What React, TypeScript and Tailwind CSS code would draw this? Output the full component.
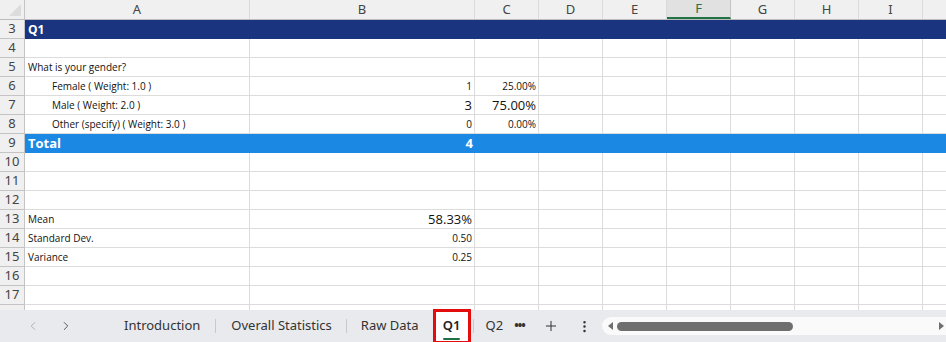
import { ChevronLeft, ChevronRight, Plus, MoreVertical } from "lucide-react";

const COLS = [
  { l: "A", w: 225 },
  { l: "B", w: 225 },
  { l: "C", w: 64 },
  { l: "D", w: 64 },
  { l: "E", w: 64 },
  { l: "F", w: 64 },
  { l: "G", w: 64 },
  { l: "H", w: 64 },
  { l: "I", w: 64 },
  { l: "", w: 64 },
];

type Row = {
  n: number | null;
  kind?: "title" | "total";
  a?: string;
  b?: string;
  c?: string;
  indent?: boolean;
  big?: boolean;
};

const ROWS: Row[] = [
  { n: 3, kind: "title", a: "Q1" },
  { n: 4 },
  { n: 5, a: "What is your gender?" },
  { n: 6, a: "Female ( Weight: 1.0 )", indent: true, b: "1", c: "25.00%" },
  { n: 7, a: "Male ( Weight: 2.0 )", indent: true, b: "3", c: "75.00%", big: true },
  { n: 8, a: "Other (specify) ( Weight: 3.0 )", indent: true, b: "0", c: "0.00%" },
  { n: 9, kind: "total", a: "Total", b: "4" },
  { n: 10 },
  { n: 11 },
  { n: 12 },
  { n: 13, a: "Mean", b: "58.33%", big: true },
  { n: 14, a: "Standard Dev.", b: "0.50" },
  { n: 15, a: "Variance", b: "0.25" },
  { n: 16 },
  { n: 17 },
  { n: null },
];

const cellFont = { fontFamily: '"Open Sans", "Noto Sans", sans-serif' };
const uiFont = { fontFamily: '"Noto Sans", "Open Sans", sans-serif' };

function HeaderRow() {
  return (
    <div className="flex h-[20px] shrink-0 border-b border-[#bdbdbd] bg-[#f0f0f0]" style={uiFont}>
      <div className="relative w-[25px] shrink-0 border-r border-[#c4c4c4]">
        <div className="absolute bottom-[3px] right-[3px] h-0 w-0 border-b-[12px] border-l-[12px] border-b-[#dcdcdc] border-l-transparent" />
      </div>
      {COLS.map((c, i) => (
        <div
          key={i}
          className={
            c.l === "F"
              ? "flex shrink-0 items-center justify-center border-r border-[#c4c4c4] border-b-2 border-b-[#217346] bg-[#e1e1e1] text-[13px] text-[#217346]"
              : "flex shrink-0 items-center justify-center border-r border-[#dadada] text-[13px] text-[#444]"
          }
          style={{ width: c.w }}
        >
          {c.l}
        </div>
      ))}
    </div>
  );
}

function SheetRow({ r }: { r: Row }) {
  const filled = r.kind === "title" || r.kind === "total";
  const bg = r.kind === "title" ? "bg-[#1b3480]" : r.kind === "total" ? "bg-[#1b88e4]" : "bg-white";
  return (
    <div className="flex h-[19px] shrink-0">
      <div
        className="flex w-[25px] shrink-0 items-center justify-center border-r border-b border-[#c4c4c4] bg-[#f0f0f0] text-[13px] text-[#444]"
        style={uiFont}
      >
        {r.n}
      </div>
      <div className={`flex ${bg}`} style={cellFont}>
        {COLS.map((c, i) => {
          let text: string | undefined;
          let align = "justify-end pr-[2px]";
          let size = "text-[10px]";
          if (i === 0) {
            text = r.a;
            align = r.indent ? "justify-start pl-[27px]" : "justify-start pl-[3px]";
          } else if (i === 1) {
            text = r.b;
            if (r.big) size = "text-[13px]";
          } else if (i === 2) {
            text = r.c;
            if (r.big) size = "text-[13px]";
          }
          let color = "text-[#111]";
          if (r.kind === "title") {
            size = "text-[12px] font-bold";
            color = "text-white";
          } else if (r.kind === "total") {
            size = "text-[13px] font-bold";
            color = "text-white";
          }
          const borders = filled ? "" : "border-r border-b border-[#dcdcdc]";
          return (
            <div
              key={i}
              className={`flex shrink-0 items-center ${align} ${borders} ${size} ${color} whitespace-nowrap leading-none`}
              style={{ width: c.w }}
            >
              {text}
            </div>
          );
        })}
      </div>
    </div>
  );
}

function Sep() {
  return <div className="h-[14px] w-px shrink-0 bg-[#c9c9c9]" />;
}

function TabBar() {
  return (
    <div className="flex h-[32px] shrink-0 items-center bg-[#e9eaed] text-[13px] text-[#333]" style={uiFont}>
      <div className="flex w-[111px] shrink-0 items-center pl-[26px]">
        <ChevronLeft size={14} strokeWidth={1.5} className="text-[#a8a8a8]" />
        <ChevronRight size={14} strokeWidth={1.5} className="ml-[19px] text-[#444]" />
      </div>
      <div className="pl-[13px] pr-[15px]">Introduction</div>
      <Sep />
      <div className="pl-[15px] pr-[14px]">Overall Statistics</div>
      <Sep />
      <div className="px-[14px]">Raw Data</div>
      <div className="flex h-[35px] w-[38px] shrink-0 items-center justify-center border-[3px] border-[#e30d0d] bg-white">
        <div className="relative font-semibold text-[#222]">
          Q1
          <div className="absolute -bottom-[4px] left-0 right-0 h-[2px] rounded bg-[#1e7145]" />
        </div>
      </div>
      <div className="ml-[2px]"><Sep /></div>
      <div className="pl-[12px] pr-[11px]">Q2</div>
      <div className="text-[12px] font-bold tracking-[-1px] text-[#333]">•••</div>
      <Plus size={16} strokeWidth={1.5} className="ml-[18px] text-[#333]" />
      <MoreVertical size={15} strokeWidth={2} className="ml-[18px] text-[#333]" />
      <div className="ml-[10px] flex h-[18px] flex-1 items-center rounded-l-full bg-[#fafafa] pl-[6px]">
        <div className="h-0 w-0 border-y-[4px] border-r-[5px] border-y-transparent border-r-[#6f6f6f]" />
        <div className="ml-[4px] h-[9px] w-[176px] rounded-full bg-[#6f6f6f]" />
        <div className="flex-1" />
        <div className="mr-[2px] h-0 w-0 border-y-[4px] border-l-[5px] border-y-transparent border-l-[#6f6f6f]" />
      </div>
    </div>
  );
}

export default function App() {
  return (
    <div className="flex h-[342px] w-[946px] flex-col overflow-hidden bg-white">
      <HeaderRow />
      <div className="flex h-[290px] shrink-0 flex-col overflow-hidden">
        {ROWS.map((r, i) => (
          <SheetRow key={i} r={r} />
        ))}
      </div>
      <TabBar />
    </div>
  );
}
